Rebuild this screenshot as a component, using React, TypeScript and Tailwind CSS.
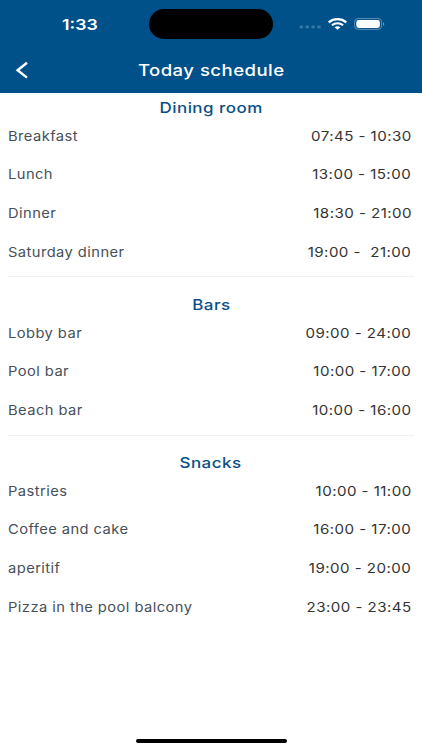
import * as React from "react";

type Item = { name: string; time: string };
type Section = { title: string; items: Item[] };

const sections: Section[] = [
  {
    title: "Dining room",
    items: [
      { name: "Breakfast", time: "07:45 - 10:30" },
      { name: "Lunch", time: "13:00 - 15:00" },
      { name: "Dinner", time: "18:30 - 21:00" },
      { name: "Saturday dinner", time: "19:00 -  21:00" },
    ],
  },
  {
    title: "Bars",
    items: [
      { name: "Lobby bar", time: "09:00 - 24:00" },
      { name: "Pool bar", time: "10:00 - 17:00" },
      { name: "Beach bar", time: "10:00 - 16:00" },
    ],
  },
  {
    title: "Snacks",
    items: [
      { name: "Pastries", time: "10:00 - 11:00" },
      { name: "Coffee and cake", time: "16:00 - 17:00" },
      { name: "aperitif", time: "19:00 - 20:00" },
      { name: "Pizza in the pool balcony", time: "23:00 - 23:45" },
    ],
  },
];

const StatusBar: React.FC = () => (
  <div className="flex h-[47px] items-center">
    <div className="w-[149px] pt-[2px] pl-[62px] text-[15px] leading-none font-semibold text-white">
      <span className="inline-block origin-left scale-x-[1.18]">1:33</span>
    </div>
    <div className="mt-px h-[30px] w-[124px] rounded-full bg-black" />
    <div className="ml-[26px] flex items-center">
      <svg width="22" height="4" viewBox="0 0 22 4" className="mt-[7px]" fill="#347aa6">
        <rect x="0.4" y="0.5" width="3.8" height="3" rx="1.4" />
        <rect x="6.3" y="0.5" width="3.8" height="3" rx="1.4" />
        <rect x="12.2" y="0.5" width="3.8" height="3" rx="1.4" />
        <rect x="18.1" y="0.5" width="3.8" height="3" rx="1.4" />
      </svg>
      <svg width="19" height="12" viewBox="0 0 19 12" className="ml-[7px]" fill="none" stroke="#fff">
        <path d="M0.7 4.4C5.6 0.1 13.4 0.1 18.3 4.4" strokeWidth="2.3" />
        <path d="M3.9 7.3C7 4.6 12 4.6 15.1 7.3" strokeWidth="2.1" />
        <path d="M6.5 9.3C8.2 7.8 10.8 7.8 12.5 9.3L9.5 11.8Z" fill="#fff" stroke="none" />
      </svg>
      <svg width="32" height="12" viewBox="0 0 32 12" className="ml-[7px]">
        <rect x="0.6" y="0.6" width="27" height="10.8" rx="3.6" fill="none" stroke="#5a92b8" />
        <rect x="2.3" y="2.1" width="23.6" height="7.8" rx="2.4" fill="#fff" />
        <path d="M29 4.2C30.8 4.8 30.8 7.2 29 7.8Z" fill="#6699bb" />
      </svg>
    </div>
  </div>
);

const Row: React.FC<Item> = ({ name, time }) => (
  <div className="flex h-[38.6px] justify-between pr-[10.5px] pl-[8.4px] text-[13.3px] leading-[18px]">
    <span className="origin-left scale-x-[1.105] tracking-[0.4px] text-[#46505a]">{name}</span>
    <span className="origin-right scale-x-[1.135] tracking-[0.4px] whitespace-pre text-[#333333]">{time}</span>
  </div>
);

const App: React.FC = () => {
  return (
    <div className="flex h-[750px] w-[422px] flex-col overflow-hidden bg-white font-['Inter',sans-serif]">
      <header className="h-[93px] bg-[#005189]">
        <StatusBar />
        <div className="flex h-[46px] items-center">
          <button className="w-[60px] pl-[15px]" aria-label="Back">
            <svg width="14" height="18" viewBox="0 0 14 18" fill="none" stroke="#fff" strokeWidth="2.4">
              <path d="M12 1.8L2.6 9.2L12 16.6" />
            </svg>
          </button>
          <h1 className="flex-1 pr-[60px] text-center text-[16px] font-medium text-white">
            <span className="inline-block scale-x-[1.16] tracking-[0.4px]">Today schedule</span>
          </h1>
        </div>
      </header>

      <main className="flex-1">
        {sections.map((section, i) => (
          <section key={section.title} className={i === 0 ? "h-[184px] pt-[5px]" : i === 1 ? "h-[158px] pt-[18px]" : "pt-[18px]"}>
            <h2 className="h-[28.8px] text-center text-[14.5px] leading-[20px] font-medium text-[#0b4f88]">
              <span className="inline-block scale-x-[1.17] tracking-[0.4px]">{section.title}</span>
            </h2>
            {section.items.map((item) => (
              <Row key={item.name} {...item} />
            ))}
            {i < 2 && <div className="mx-[8px] -mt-[5px] h-px bg-[#f2f2f2]" />}
          </section>
        ))}
      </main>

      <div className="mx-auto mb-[7px] h-[4px] w-[151px] rounded-full bg-black" />
    </div>
  );
};

export default App;
